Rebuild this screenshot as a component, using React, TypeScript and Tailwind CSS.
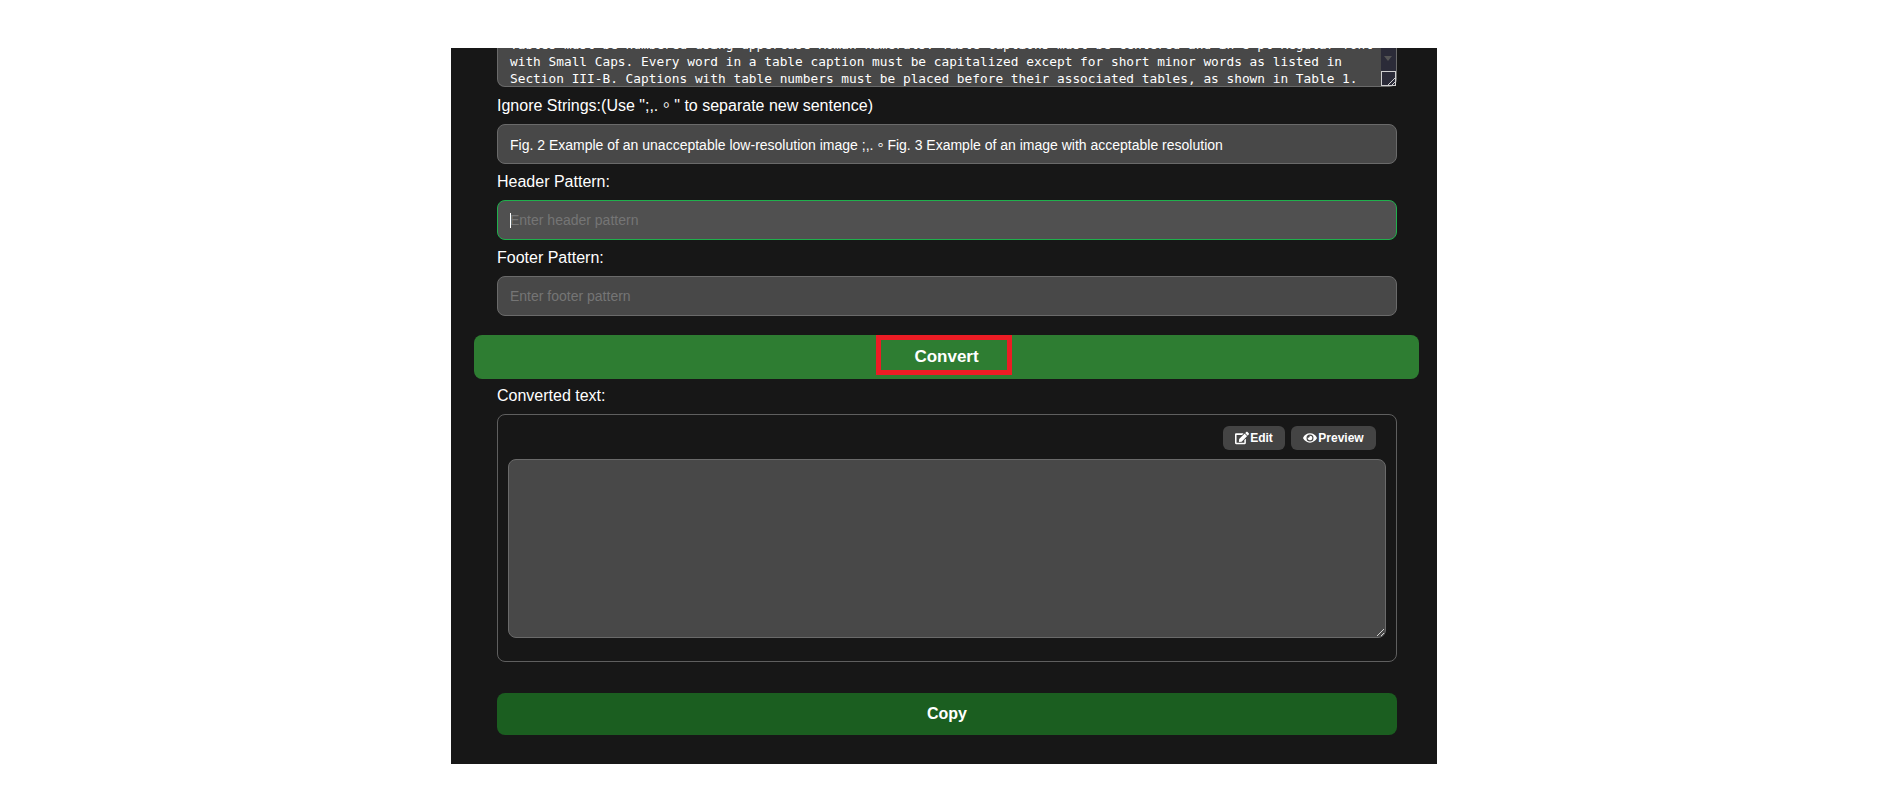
import { FaEdit, FaEye } from "react-icons/fa"

const sans = "font-['Liberation_Sans','Noto_Sans_CJK_TC',sans-serif]"

const sourceLines = [
  "Tables must be numbered using uppercase Roman numerals. Table captions must be centered and in 8 pt Regular font",
  "with Small Caps. Every word in a table caption must be capitalized except for short minor words as listed in",
  "Section III-B. Captions with table numbers must be placed before their associated tables, as shown in Table 1.",
]

function Grip() {
  return (
    <svg viewBox="0 0 10 10" className="absolute bottom-0 right-0 h-[10px] w-[10px]">
      <path d="M2 9 L9 2 M6 9 L9 6" stroke="#cfcfcf" strokeWidth="1" fill="none" />
    </svg>
  )
}

function Field({ label, focused, ...props }: { label: React.ReactNode; focused?: boolean; placeholder?: string; defaultValue?: string }) {
  return (
    <div className="flex flex-col">
      <label className="mt-[9px] mb-[9px] h-[18px] text-base leading-[18px] text-white">{label}</label>
      <div className="relative">
        <input
          {...props}
          className={`h-10 w-full rounded-lg border px-3 text-sm text-white outline-none placeholder:text-[#757575] ${
            focused ? "border-[#1fb04c] bg-[#505050]" : "border-[#6a6a6a] bg-[#484848]"
          }`}
        />
        {focused && <span className="absolute left-[13px] top-[13px] h-[15px] w-px bg-white" />}
      </div>
    </div>
  )
}

export default function App() {
  return (
    <div className={`min-h-[812px] bg-white pt-12 ${sans}`}>
      <main className="mx-auto flex h-[716px] w-[986px] flex-col overflow-hidden bg-[#171717] pl-[46px] pr-[40px]">
        <div className="flex h-[39px] flex-col justify-end overflow-hidden">
          <div className="relative flex shrink-0 rounded-b-lg border border-t-0 border-[#6a6a6a] bg-[#484848]">
            <pre className="-mb-px flex-1 pl-3 font-['DejaVu_Sans_Mono',monospace] text-[12.8px] leading-[17px] text-white">
              {sourceLines.join("\n")}
            </pre>
            <div className="relative w-[15px] bg-[#2b2b38]">
              <span className="absolute bottom-[25px] left-[3px] h-0 w-0 border-x-[4px] border-t-[5px] border-x-transparent border-t-[#555]" />
              <span className="absolute bottom-0 right-0 h-[15px] w-[15px] border border-[#cfcfcf] bg-[#2b2b38]" />
              <Grip />
            </div>
          </div>
        </div>

        <div className="flex flex-col pt-px">
          <Field
            label={'Ignore Strings:(Use ";,.。" to separate new sentence)'}
            defaultValue="Fig. 2 Example of an unacceptable low-resolution image ;,.。Fig. 3 Example of an image with acceptable resolution"
          />
          <Field label="Header Pattern:" placeholder="Enter header pattern" focused />
          <Field label="Footer Pattern:" placeholder="Enter footer pattern" />
        </div>

        <button className="relative -ml-[23px] -mr-[22px] mt-[19px] h-11 shrink-0 rounded-lg bg-[#2e7d32] text-[17px] font-bold text-white">
          Convert
          <span className="absolute left-[402px] top-0 h-10 w-[136px] border-[5px] border-[#ed1c24]" />
        </button>

        <div className="mt-2 mb-[9px] h-[18px] text-base leading-[18px] text-white">Converted text:</div>

        <section className="flex h-[248px] shrink-0 flex-col rounded-lg border border-[#5f5f5f] px-[10px] pt-[11px]">
          <div className="flex justify-end gap-[6px] pr-[10px]">
            <button className="flex h-6 w-[62px] items-center justify-center gap-px rounded-md bg-[#444] text-xs font-bold text-white">
              <FaEdit className="h-[14px] w-[14px]" />
              Edit
            </button>
            <button className="flex h-6 w-[85px] items-center justify-center gap-px rounded-md bg-[#444] text-xs font-bold text-white">
              <FaEye className="h-[14px] w-[14px]" />
              Preview
            </button>
          </div>
          <div className="relative mt-[9px] h-[179px] rounded-lg border border-[#6a6a6a] bg-[#484848]">
            <Grip />
          </div>
        </section>

        <button className="mt-[31px] h-[42px] shrink-0 rounded-lg bg-[#1b5e20] text-base font-bold text-white">Copy</button>
      </main>
    </div>
  )
}
